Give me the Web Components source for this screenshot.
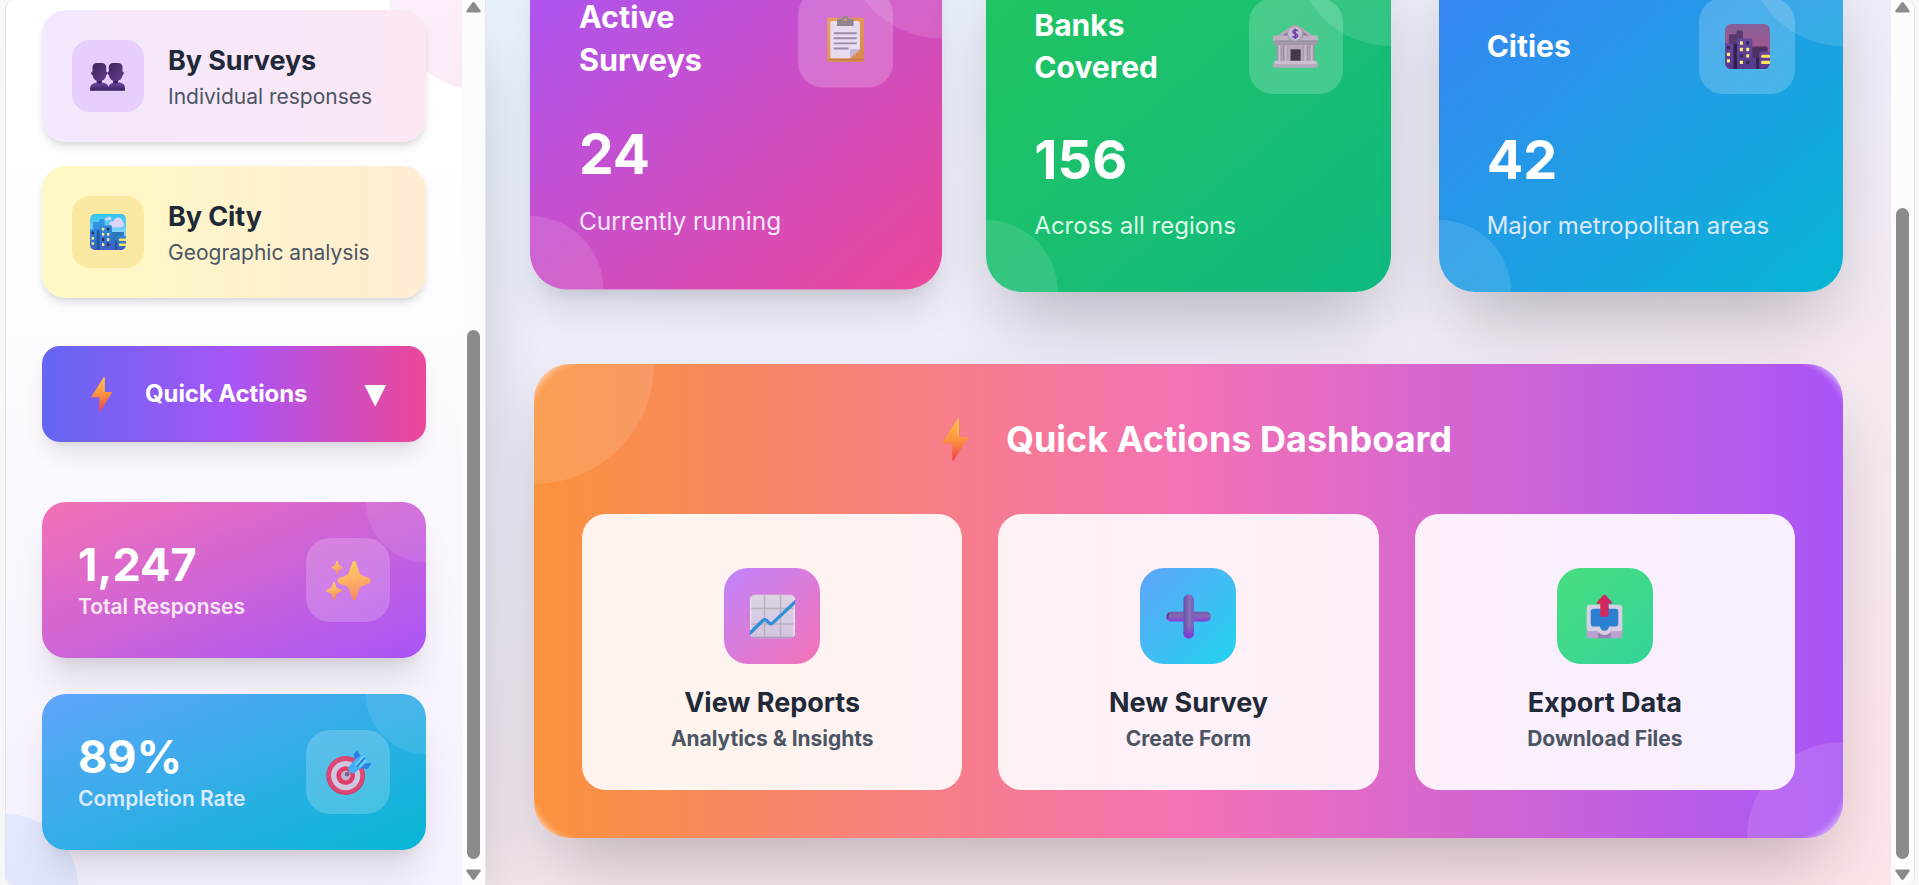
<!DOCTYPE html>
<html lang="en">
<head>
<meta charset="utf-8">
<title>Survey Dashboard</title>
<style>
  html, body { margin: 0; height: 100%; overflow: hidden; background: #f7f7f7; }
  body { font-family: Inter, "Liberation Sans", sans-serif; color: #1f2937; }
</style>
</head>
<body>
<survey-app></survey-app>
<script>
const BOX = '*{box-sizing:border-box}';

function define(name, render) {
  customElements.define(name, class extends HTMLElement {
    connectedCallback() {
      if (this.shadowRoot) return;
      const t = document.createElement('template');
      t.innerHTML = render(this);
      this.attachShadow({ mode: 'open' }).appendChild(t.content.cloneNode(true));
    }
  });
}

/* Skyline shared by the day and night city icons. */
function skyline(c) {
  const win = (x, y, lit) => `<rect x="${x}" y="${y}" width="2.1" height="2.4" rx=".4" fill="${lit ? '#fff07a' : '#33284f'}"/>`;
  return `<defs><linearGradient id="sky" x2="0" y2="1"><stop stop-color="${c.sky[0]}"/><stop offset="1" stop-color="${c.sky[1]}"/></linearGradient>
  <linearGradient id="bl" x2="0" y2="1"><stop stop-color="${c.front[0]}"/><stop offset="1" stop-color="${c.front[1]}"/></linearGradient>
  <clipPath id="cp"><rect width="32" height="32" rx="4.5"/></clipPath></defs>
  <g clip-path="url(#cp)"><rect width="32" height="32" fill="url(#sky)"/>${c.extra}
  <path d="M2.8 32V7.2h5.4V5.6q0-1 1-1h2.600q1 0 1 1V32z" fill="${c.back}"/>
  <path d="M18 32V16h11.500q.8 0 .8.8V32z" fill="${c.back2}"/>
  <path d="M5 14h4v18H5z" fill="${c.shade}"/><path d="M22 24h3v8h-3z" fill="${c.shade}"/>
  <path d="M0 13.600h4.800q1.200 0 1.200 1.200V32H0z" fill="url(#bl)"/>
  <path d="M8.500 32V11.300q0-1.200 1.200-1.200h8.600q1.200 0 1.200 1.200V24h1.500q1.200 0 1.200 1V32z" fill="url(#bl)"/>
  <path d="M24.300 32V20.700q0-1.200 1.200-1.200H32V32z" fill="url(#bl)"/>
  ${win(1.4, 15.6, 0)}${win(1.4, 20.4, 1)}${win(1.4, 25, 1)}
  ${win(10.6, 12.300, 1)}${win(15.100, 12.300, 0)}${win(10.6, 16.900, 1)}${win(15.100, 16.900, 1)}
  ${win(10.6, 21.500, 0)}${win(15.100, 21.500, 1)}${win(10.6, 26.100, 1)}${win(15.100, 26.100, 0)}
  <path d="M32 21.800h-5.400q-1 0-1 1.100t1 1.100H32zM32 26.200h-5.400q-1 0-1 1.100t1 1.100H32z" fill="#fde35a"/></g>`;
}

const bolt = `<defs><linearGradient id="g" x2="0" y2="1"><stop stop-color="#ffc247"/><stop offset=".5" stop-color="#fb923f"/><stop offset="1" stop-color="#f0404e"/></linearGradient></defs>
  <path d="M17.500 1.200Q18.400.2 18.400 1.500V14.200h5.800q1 0 .4 1L14.700 31q-1 1.200-1-.2V18.800H7.300q-1 0-.4-1z" fill="url(#g)"/>
  <path d="M17.800 2.500V14" stroke="#ffd257" stroke-width="1" opacity=".6"/>`;
const star = (x, y, rx, ry) => `<path d="M${x} ${y - ry}C${x + rx * .16} ${y - ry} ${x + rx * .24} ${y - ry * .42} ${x + rx * .38} ${y - ry * .32}C${x + rx * .5} ${y - ry * .2} ${x + rx} ${y - ry * .18} ${x + rx} ${y}C${x + rx} ${y + ry * .18} ${x + rx * .5} ${y + ry * .2} ${x + rx * .38} ${y + ry * .32}C${x + rx * .24} ${y + ry * .42} ${x + rx * .16} ${y + ry} ${x} ${y + ry}C${x - rx * .16} ${y + ry} ${x - rx * .24} ${y + ry * .42} ${x - rx * .38} ${y + ry * .32}C${x - rx * .5} ${y + ry * .2} ${x - rx} ${y + ry * .18} ${x - rx} ${y}C${x - rx} ${y - ry * .18} ${x - rx * .5} ${y - ry * .2} ${x - rx * .38} ${y - ry * .32}C${x - rx * .24} ${y - ry * .42} ${x - rx * .16} ${y - ry} ${x} ${y - ry}z" fill="url(#g)"/>`;

const ICONS = {
  bolt,
  people: `<defs><linearGradient id="g" x1="0" y1="0" x2="1" y2="1"><stop stop-color="#3f2358"/><stop offset="1" stop-color="#623d8e"/></linearGradient>
    <linearGradient id="b" x2="0" y2="1"><stop stop-color="#6f4aa5"/><stop offset="1" stop-color="#3b2061"/></linearGradient></defs>
    <path d="M0 29v-1.500q0-5 6-5.800h5q4.500.6 5.500 4V29z" fill="url(#b)"/><path d="M16 29v-2.500q1-4.200 5.500-4.800h5q4.600.8 4.600 5V29z" fill="url(#b)"/>
    <path d="M6 18h4.500v4.500H6zM20.500 18H25v4.500h-4.500z" fill="#3b2158"/>
    <path d="M2.600 12q-1.600-.2-1.600 1.500t1.700 1.600zM13.900 12q1.600-.2 1.600 1.500t-1.700 1.600zM17.200 12q-1.600-.2-1.600 1.500t1.700 1.600zM28.500 12q1.600-.2 1.600 1.500t-1.700 1.600z" fill="#4a2b6c"/>
    <path d="M2.200 8.500Q2.500 4.500 6 4.500h4.500q3.700 0 3.900 4v7q-1 5-6.100 5t-5.900-5z" fill="url(#g)"/>
    <path d="M16.700 8.500q.3-4 3.800-4H25q3.700 0 3.900 4v7q-1 5-6.100 5t-5.900-5z" fill="url(#g)"/>`,
  city: skyline({ sky: ['#2fc3f0', '#cfe3ff'], front: ['#2b8be0', '#3c60c4'], back: '#3393dc', back2: '#2b77b8', shade: '#25559b',
    extra: '<g fill="#dcd3f8"><circle cx="25" cy="7" r="4"/><circle cx="20" cy="9" r="2.800"/><circle cx="27.500" cy="9" r="2.500"/><path d="M19 8h9v3.800h-9z"/><circle cx="15" cy="4.600" r="1.500"/><circle cx="17.200" cy="3.900" r="1.600"/></g>' }),
  night: skyline({ sky: ['#85609a', '#c04e82'], front: ['#67489f', '#56398a'], back: '#593a70', back2: '#4c3162', shade: '#30204c', extra: '' }),
  sparkles: `<defs><linearGradient id="g" x2=".2" y2="1"><stop stop-color="#ffd35b"/><stop offset=".5" stop-color="#fdb565"/><stop offset="1" stop-color="#f98a62"/></linearGradient></defs>
    ${star(20, 16.100, 12, 14.200)}${star(7.900, 6.700, 4, 4.900)}${star(5.700, 23.300, 5.500, 6.500)}`,
  target: `<circle cx="14" cy="18.200" r="13.800" fill="#c83e68"/><circle cx="14" cy="17.800" r="13.400" fill="#dd4773"/><circle cx="14" cy="18.200" r="10.400" fill="#cfc6df"/>
    <circle cx="14" cy="18.200" r="6.700" fill="#df3e6d"/><circle cx="14" cy="18.200" r="3.400" fill="#c1b4cf"/><circle cx="15" cy="17.200" r="1.600" fill="#77648a"/>
    <path d="M20.500 6.500q-2.300-3.500 1.700-6.200L24.500 4v4zM25.500 10l6.500-1q.4 1.700-2.700 4.500l-5.300-.5z" fill="#2c7fe0"/>
    <path d="M15.800 12.500Q20.500 6 24.500 4.500q4.200.5 3.700 4Q24.500 14 19.300 16.700q-3.800-.3-3.500-4.200z" fill="#45b1f2"/><path d="M21 11l6-6.800M23.600 12.500l5-5.500" stroke="#6fd1ff" stroke-width="1.200"/>
    <path d="M22 11.800l5.500-6.300" stroke="#1f68be" stroke-width=".8"/>`,
  clipboard: `<defs><linearGradient id="g" x2="1" y2="1"><stop stop-color="#e9a25d"/><stop offset="1" stop-color="#d98850"/></linearGradient></defs>
    <rect x="3.200" y="1.200" width="25.600" height="30.800" rx="1.700" fill="url(#g)"/><path d="M3.500 30.500h25" stroke="#c57c4c"/>
    <path d="M5.300 4.700q0-1.200 1.200-1.200h18.300q1.200 0 1.200 1.200v18.500L19 29.500H6.500q-1.200 0-1.200-1.200z" fill="#e6dbef"/><path d="M19 29.500v-5.600q0-.8.8-.8H26z" fill="#c5b6d2"/>
    <path d="M7.700 12h16M7.700 15.500h16M7.700 19h16M7.700 22.600H18" stroke="#9a89a8" stroke-width="1.300"/>
    <path d="M10 7V3.500q0-1.800 2-1.800h1.700Q14.200 0 15.800 0t2.100 1.700h1.600q2 0 2 1.800V7z" fill="#8f8390"/><circle cx="15.800" cy="2.500" r="1.100" fill="#dc985b"/>`,
  bank: `<defs><linearGradient id="g" x2="1"><stop stop-color="#9a8fa3"/><stop offset=".5" stop-color="#ccc0d0"/><stop offset="1" stop-color="#9f94a8"/></linearGradient></defs>
    <path d="M2 9L13.500 1.300q2.300-1.300 4.600 0L30 9z" fill="#b5a9bb"/><path d="M5 9.300L14 3.500h4l9 5.800z" fill="#837789"/>
    <path d="M2.600 14h26.800v13H2.600z" fill="#9a8ea1"/><path d="M6 15h1v12H6zM25 15h1v12h-1zM10.500 15h11v12h-11z" fill="#b4a9ba"/>
    <g fill="url(#g)"><rect x="3" y="15" width="3" height="12"/><rect x="7.500" y="15" width="3.200" height="12"/><rect x="21.300" y="15" width="3.200" height="12"/><rect x="26" y="15" width="3" height="12"/></g>
    <rect x="12.500" y="18" width="7.200" height="9" rx=".6" fill="#44384f"/>
    <rect y="8.200" width="32" height="3.800" rx=".9" fill="#bdb2c3"/><rect y="12.300" width="32" height="2.400" rx=".9" fill="#a598ad"/><path d="M1 12h30" stroke="#8e8296" stroke-width=".6"/>
    <rect x=".8" y="26.200" width="30.400" height="3" rx=".8" fill="#c8bfd0"/><rect y="28.500" width="32" height="2.600" rx=".8" fill="#b5a9bd"/>
    <circle cx="15.900" cy="7" r="5.900" fill="#a699af"/><circle cx="15.700" cy="6.800" r="5" fill="#c7bccf"/>
    <path d="M17.700 5q-1.800-1.200-3.200-.4-1 1.200.6 2 2.800.8 2.300 2.100-1 1.500-3.600.2M15.800 3.200v7.400" stroke="#7044a6" stroke-width="1.200" fill="none"/>`,
  chart: `<defs><linearGradient id="g" x2="0" y2="1"><stop stop-color="#dcd4e2"/><stop offset="1" stop-color="#d2c4e2"/></linearGradient><clipPath id="cp"><rect y=".5" width="32" height="31" rx="3.500"/></clipPath></defs>
    <g clip-path="url(#cp)"><rect width="32" height="32" fill="url(#g)"/><path d="M10.300 0v32M21.700 0v32M0 10.300h32M0 21.300h32" stroke="#b9b0c0" stroke-width="1"/>
    <path d="M31.500 0v32M.4 0v32" stroke="#e9e4ec"/><path d="M0 31h32" stroke="#aa9dba" stroke-width="1.200"/>
    <path d="M-1 28.800L9.300 18.700q1.100-1 2.200 0l2.400 2.100q1 .9 2.100-.1L33 4.700" fill="none" stroke="#2e8ed7" stroke-width="2.300"/></g>`,
  plus: `<defs><linearGradient id="h" x2="0" y2="1"><stop stop-color="#7558a6"/><stop offset=".45" stop-color="#856ab5"/><stop offset="1" stop-color="#833bdd"/></linearGradient>
    <linearGradient id="v"><stop stop-color="#6650a5"/><stop offset=".6" stop-color="#8a72ba"/><stop offset="1" stop-color="#745ac0"/></linearGradient>
    <linearGradient id="e" x2="0" y2="1"><stop offset=".7" stop-color="#7a3ad8" stop-opacity="0"/><stop offset="1" stop-color="#8134e0"/></linearGradient></defs>
    <rect x="0" y="12.600" width="32" height="7" rx="3.500" fill="url(#h)"/><rect x="12.400" y=".4" width="7.400" height="31.300" rx="3.600" fill="url(#v)"/>
    <rect x="12.400" y=".4" width="7.400" height="31.300" rx="3.600" fill="url(#e)"/><path d="M2 13.800q-1.200 1.300-.8 3.500" stroke="#563583" stroke-width="1.200" fill="none"/>`,
  outbox: `<path d="M3.300 24h25.400v5.600q0 1.800-1.800 1.800H5.100q-1.800 0-1.800-1.800z" fill="#b9a1cf"/><path d="M11.500 28h9v3.400h-9z" fill="#9b7fb4"/>
    <path d="M3.300 9.800q0-2.200 2.200-2.200h21q2.200 0 2.200 2.200v14.800q0 1.900-2 1.900h-6.200q-1.500 2.600-4.500 2.600t-4.500-2.600H5.300q-2 0-2-1.900z" fill="#d8cfe2"/>
    <path d="M6.200 12.500q0-2 2-2h15.600q2 0 2 2v8.600q0 2-2 2h-4.600q-.6 3-3.200 3t-3.200-3H8.200q-2 0-2-2z" fill="#2b80d2"/>
    <defs><linearGradient id="g"><stop stop-color="#df2440"/><stop offset="1" stop-color="#c02b81"/></linearGradient></defs>
    <path d="M15 .8q1-1 2 0l4.400 5q.6 1-.5 1.100H19v8.200q0 1-1 1h-4q-1 0-1-1V6.900h-1.900q-1.200-.1-.5-1.100z" fill="url(#g)"/>`
};

define('emoji-icon', el => `<style>:host{display:block;flex:none;width:var(--size,45px);height:var(--size,45px)}svg{display:block;width:100%;height:100%;overflow:visible}</style>
  <svg viewBox="0 0 32 32" aria-hidden="true">${ICONS[el.getAttribute('name')]}</svg>`);

define('nav-item', el => `<style>${BOX}
  :host{display:flex;align-items:center;gap:24px;height:132px;padding:30px;border-radius:24px;background:var(--bg);box-shadow:0 6px 9px -1.5px rgba(0,0,0,.1),0 3px 6px -3px rgba(0,0,0,.1)}
  .icon{display:flex;align-items:center;justify-content:center;width:72px;height:72px;border-radius:18px;background:var(--tile);--size:36px}
  .title{font-size:27px;line-height:42px;font-weight:700;letter-spacing:-.1px;color:#1f2937;white-space:nowrap}
  .sub{font-size:21px;line-height:30px;color:#4b5563;white-space:nowrap}</style>
  <div class="icon"><emoji-icon name="${el.getAttribute('icon')}"></emoji-icon></div>
  <div><div class="title"><slot></slot></div><div class="sub"><slot name="sub"></slot></div></div>`);

define('quick-button', () => `<style>${BOX}
  :host{display:flex;align-items:center;height:96px;padding:0 40px 0 42px;border-radius:18px;color:#fff;background:linear-gradient(to right,#6366f1,#a855f7,#ec4899);box-shadow:0 15px 22.5px -4.5px rgba(0,0,0,.1),0 6px 9px -6px rgba(0,0,0,.1)}
  emoji-icon{--size:36px}
  span{margin-left:25px;flex:1;font-size:24px;line-height:36px;font-weight:700;letter-spacing:-.1px;white-space:nowrap}
  i{font:normal 28px/36px "DejaVu Sans",sans-serif}</style>
  <emoji-icon name="bolt"></emoji-icon><span><slot></slot></span><i>▼</i>`);

define('mini-stat', el => `<style>${BOX}
  :host{position:relative;display:flex;align-items:center;justify-content:space-between;height:156px;padding:36px;border-radius:24px;color:#fff;background:var(--bg);box-shadow:0 30px 37.5px -7.5px rgba(0,0,0,.1),0 12px 15px -9px rgba(0,0,0,.1)}
  .clip{position:absolute;inset:0;border-radius:24px;overflow:hidden}
  .clip::before{content:"";position:absolute;top:-60px;right:-60px;width:120px;height:120px;border-radius:50%;background:rgba(255,255,255,.1)}
  .text{position:relative;white-space:nowrap}
  .num{font-size:45px;line-height:54px;font-weight:700}
  .label{font-size:21px;line-height:30px;font-weight:600;color:var(--label)}
  .icon{position:relative;display:flex;align-items:center;justify-content:center;width:84px;height:84px;border-radius:24px;background:rgba(255,255,255,.2)}</style>
  <div class="clip"></div><div class="text"><div class="num"><slot></slot></div><div class="label"><slot name="label"></slot></div></div>
  <div class="icon"><emoji-icon name="${el.getAttribute('icon')}"></emoji-icon></div>`);

define('scroll-rail', () => `<style>${BOX}
  :host{display:flex;flex-direction:column;align-items:center;width:23px;flex:none;background:#fcfcfc;padding:2px 0 5px}
  svg{display:block;width:15px;height:11px;flex:none}
  .thumb{width:13px;border-radius:6.500px;background:#8b8b8b;margin-top:var(--top);flex:1;margin-bottom:10.500px}</style>
  <svg viewBox="0 0 15 11"><path d="M6.200.8q1.300-1.400 2.600 0l5.600 7.700q.9 2-1 2H1.600q-1.900 0-1-2z" fill="#8b8b8b"/></svg>
  <div class="thumb"></div>
  <svg viewBox="0 0 15 11"><path d="M6.200 10.200q1.300 1.400 2.600 0l5.600-7.700q.9-2-1-2H1.600q-1.900 0-1 2z" fill="#8b8b8b"/></svg>`);

define('side-bar', () => `<style>${BOX}
  :host{position:relative;z-index:2;display:flex;width:481px;height:885px;flex:none;border-left:1px solid #e3e3e8;border-right:1px solid #ebe0fa;border-radius:9px 0 0 9px;overflow:hidden;background:linear-gradient(#fff,#fdfcff 35%,#f6f1fe)}
  .body{position:relative;z-index:0;flex:1;overflow:hidden;padding:10px 36px 0}
  .body::before{content:"";position:absolute;left:383px;top:-101px;width:192px;height:192px;border-radius:50%;background:linear-gradient(135deg,rgba(192,132,252,.1),rgba(244,114,182,.16))}
  .body::after{content:"";position:absolute;left:-72px;top:814px;width:144px;height:144px;border-radius:50%;background:linear-gradient(to top right,rgba(96,165,250,.16),rgba(96,165,250,.12));z-index:-1}
  nav,.stats{position:relative;display:flex;flex-direction:column;gap:24px}
  quick-button{position:relative;margin:48px 0 60px}.stats{gap:36px}
  scroll-rail{--top:317px}</style>
  <div class="body"><nav>
    <nav-item icon="people" style="--bg:linear-gradient(to right,#f3e8ff,#fce7f3);--tile:#e6cdfb">By Surveys<span slot="sub">Individual responses</span></nav-item>
    <nav-item icon="city" style="--bg:linear-gradient(to right,#fef9c3,#ffedd5);--tile:#fbe9a1">By City<span slot="sub">Geographic analysis</span></nav-item></nav>
    <quick-button>Quick Actions</quick-button>
    <div class="stats">
    <mini-stat icon="sparkles" style="--bg:linear-gradient(to bottom right,#f472b6,#a855f7);--label:#fce7f3">1,247<span slot="label">Total Responses</span></mini-stat>
    <mini-stat icon="target" style="--bg:linear-gradient(to bottom right,#60a5fa,#06b6d4);--label:#dbeafe">89%<span slot="label">Completion Rate</span></mini-stat></div>
  </div><scroll-rail></scroll-rail>`);

define('stat-card', el => `<style>${BOX}
  :host{position:relative;display:block;height:342px;padding:48px;border-radius:36px;color:#fff;background:var(--bg);box-shadow:0 37.5px 75px -18px rgba(0,0,0,.25)}
  :host([raised]){transform:translateY(-6px) scale(1.02);box-shadow:0 30px 37.5px -7.5px rgba(0,0,0,.1),0 12px 15px -9px rgba(0,0,0,.1)}
  .clip{position:absolute;inset:0;border-radius:36px;overflow:hidden}
  .clip::before,.clip::after{content:"";position:absolute;border-radius:50%;background:rgba(255,255,255,.12)}
  .clip::before{top:-96px;right:-96px;width:192px;height:192px}
  .clip::after{bottom:-72px;left:-72px;width:144px;height:144px}
  header{position:relative;display:flex;align-items:center;justify-content:space-between;height:96px;margin-bottom:36px;font-size:30px;line-height:42px;font-weight:700}
  .icon{display:flex;align-items:center;justify-content:center;width:var(--iw,96px);height:96px;border-radius:24px;background:rgba(255,255,255,.2)}
  .num{position:relative;font-size:54px;line-height:60px;font-weight:700;margin-bottom:18px}
  .sub{position:relative;font-size:24px;line-height:36px;color:var(--sub);white-space:nowrap}</style>
  <div class="clip"></div><header><div><slot></slot></div><div class="icon"><emoji-icon name="${el.getAttribute('icon')}"></emoji-icon></div></header>
  <div class="num"><slot name="num"></slot></div><div class="sub"><slot name="sub"></slot></div>`);

define('action-card', el => `<style>${BOX}
  :host{position:relative;display:flex;flex-direction:column;align-items:center;height:276px;padding:54px 36px 36px;border-radius:24px;background:rgba(255,255,255,.9);white-space:nowrap}
  .icon{display:flex;align-items:center;justify-content:center;width:96px;height:96px;border-radius:24px;background:var(--bg);margin-bottom:18px}
  .title{font-size:27px;line-height:42px;font-weight:700;color:#1f2937}
  .sub{font-size:21px;line-height:30px;font-weight:700;letter-spacing:-.05px;color:#4b5563}</style>
  <div class="icon"><emoji-icon name="${el.getAttribute('icon')}"></emoji-icon></div><div class="title"><slot></slot></div><div class="sub"><slot name="sub"></slot></div>`);

define('action-panel', () => `<style>${BOX}
  :host{position:relative;display:block;height:474px;padding:48px;border-radius:36px;background:linear-gradient(to right,#fb923c,#f472b6,#a855f7);box-shadow:0 37.5px 75px -18px rgba(0,0,0,.25)}
  .clip{position:absolute;inset:0;border-radius:36px;overflow:hidden;
    --g:transparent 61px,rgba(255,255,255,.12) 65px,rgba(255,255,255,.5) 71px;}
  .clip::before,.clip::after{content:"";position:absolute;border-radius:50%;background:rgba(255,255,255,.12)}
  .clip::before{top:-120px;left:-120px;width:240px;height:240px}
  .clip::after{bottom:-96px;right:-96px;width:192px;height:192px}
  .glow{position:absolute;inset:0;background:
    radial-gradient(circle at 60px 60px,var(--g)) 0 0/48px 48px no-repeat,
    radial-gradient(circle at -12px 60px,var(--g)) 100% 0/48px 48px no-repeat,
    radial-gradient(circle at 60px -12px,var(--g)) 0 100%/48px 48px no-repeat,
    radial-gradient(circle at -12px -12px,var(--g)) 100% 100%/48px 48px no-repeat}
  h2{position:relative;display:flex;align-items:center;justify-content:center;gap:28px;padding-left:8px;margin:0 0 48px;font-size:36px;line-height:54px;font-weight:700;color:#fff}
  .grid{position:relative;display:grid;grid-template-columns:repeat(3,1fr);gap:36px}</style>
  <div class="clip"><div class="glow"></div></div>
  <h2><emoji-icon name="bolt"></emoji-icon><span>Quick Actions Dashboard</span></h2>
  <div class="grid">
    <action-card icon="chart" style="--bg:linear-gradient(to bottom right,#c084fc,#f472b6)">View Reports<span slot="sub">Analytics &amp; Insights</span></action-card>
    <action-card icon="plus" style="--bg:linear-gradient(to bottom right,#60a5fa,#22d3ee)">New Survey<span slot="sub">Create Form</span></action-card>
    <action-card icon="outbox" style="--bg:linear-gradient(to bottom right,#4ade80,#34d399)">Export Data<span slot="sub">Download Files</span></action-card>
  </div>`);

define('main-area', () => `<style>${BOX}
  :host{display:flex;flex:none;width:1429px;height:885px;overflow:hidden;border-right:1px solid #e3e3e3;border-radius:0 9px 9px 0}
  .body{position:relative;flex:1;overflow:hidden;padding:0 48px;background:linear-gradient(160deg,#e8f2fe,#eeedf9 34%,#f5e9f2 62%,#ffe4e8)}
  .edge{position:absolute;left:-481px;width:481px;top:0;bottom:0;box-shadow:0 37.5px 75px -18px rgba(0,0,0,.25)}
  .cards{position:relative;display:grid;grid-template-columns:repeat(3,1fr);gap:48px;margin:-50px 0 72px}
  scroll-rail{--top:195px}</style>
  <div class="body"><div class="edge"></div><div class="cards">
    <stat-card raised icon="clipboard" style="--bg:linear-gradient(to bottom right,#a855f7,#ec4899);--sub:#f3e8ff;--iw:93px">Active<br>Surveys<span slot="num">24</span><span slot="sub">Currently running</span></stat-card>
    <stat-card icon="bank" style="--bg:linear-gradient(to bottom right,#22c55e,#10b981);--sub:#dcfce7;--iw:94px">Banks<br>Covered<span slot="num">156</span><span slot="sub">Across all regions</span></stat-card>
    <stat-card icon="night" style="--bg:linear-gradient(to bottom right,#3b82f6,#06b6d4);--sub:#dbeafe">Cities<span slot="num">42</span><span slot="sub">Major metropolitan areas</span></stat-card>
  </div><action-panel></action-panel></div><scroll-rail></scroll-rail>`);

define('survey-app', () => `<style>${BOX}:host{display:flex;height:885px;padding-left:5px}</style><side-bar></side-bar><main-area></main-area>`);
</script>
</body>
</html>
